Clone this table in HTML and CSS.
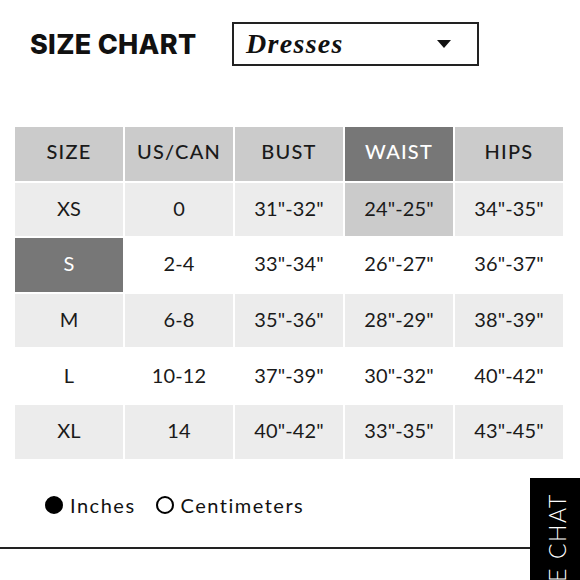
FILE: index.html
```html
<!DOCTYPE html>
<html>
<head>
<meta charset="utf-8">
<link rel="stylesheet" href="styles.css">
</head>
<body>
<div class="page">
  <header class="top">
    <h1 class="title">SIZE CHART</h1>
    <div class="select">
      <span class="select-text">Dresses</span>
      <svg class="caret" width="14" height="9" viewBox="0 0 14 9"><path d="M0 0H14L7 8Z" fill="#111"/></svg>
    </div>
  </header>

  <div class="chart">
    <div class="cell head">SIZE</div>
    <div class="cell head">US/CAN</div>
    <div class="cell head">BUST</div>
    <div class="cell head dark">WAIST</div>
    <div class="cell head">HIPS</div>

    <div class="cell alt">XS</div>
    <div class="cell alt">0</div>
    <div class="cell alt">31"-32"</div>
    <div class="cell mid">24"-25"</div>
    <div class="cell alt">34"-35"</div>

    <div class="cell dark">S</div>
    <div class="cell">2-4</div>
    <div class="cell">33"-34"</div>
    <div class="cell">26"-27"</div>
    <div class="cell">36"-37"</div>

    <div class="cell alt">M</div>
    <div class="cell alt">6-8</div>
    <div class="cell alt">35"-36"</div>
    <div class="cell alt">28"-29"</div>
    <div class="cell alt">38"-39"</div>

    <div class="cell">L</div>
    <div class="cell">10-12</div>
    <div class="cell">37"-39"</div>
    <div class="cell">30"-32"</div>
    <div class="cell">40"-42"</div>

    <div class="cell alt">XL</div>
    <div class="cell alt">14</div>
    <div class="cell alt">40"-42"</div>
    <div class="cell alt">33"-35"</div>
    <div class="cell alt">43"-45"</div>
  </div>

  <div class="units">
    <label class="unit"><span class="dot filled"></span>Inches</label>
    <label class="unit"><span class="dot"></span>Centimeters</label>
  </div>

  <div class="rule"></div>
</div>
<div class="chat"><span class="chat-text">LIVE CHAT</span></div>
</body>
</html>
```

FILE: styles.css
```css
html, body {
  margin: 0;
  padding: 0;
  background: #fff;
  width: 580px;
  height: 580px;
  overflow: hidden;
}
body {
  font-family: "Lato", "Liberation Sans", sans-serif;
  color: #1a1a1a;
  position: relative;
}
.page {
  display: flex;
  flex-direction: column;
}
.top {
  display: flex;
  align-items: center;
  padding: 22px 0 0 30px;
  height: 43px;
}
.title {
  margin: 0;
  font-family: "Inter", "Liberation Sans", sans-serif;
  font-weight: 800;
  font-size: 27px;
  letter-spacing: 0.3px;
  color: #111;
  width: 202px;
  line-height: 1;
  padding-top: 2px;
}
.select {
  box-sizing: border-box;
  width: 247px;
  height: 44px;
  border: 2px solid #222;
  display: flex;
  align-items: center;
  justify-content: space-between;
  padding: 0 26px 0 12px;
}
.select-text {
  font-family: "Liberation Serif", serif;
  font-style: italic;
  font-weight: 700;
  font-size: 28px;
  color: #111;
  letter-spacing: 1.3px;
}
.caret {
  display: block;
  margin-top: 1px;
}
.chart {
  margin: 62px 0 0 15px;
  width: 548px;
  display: grid;
  grid-template-columns: repeat(5, 108px);
  grid-auto-rows: 53.6px;
  gap: 2px;
}
.cell {
  display: flex;
  align-items: center;
  justify-content: center;
  font-size: 20px;
  color: #1a1a1a;
  background: #fff;
  letter-spacing: 0.1px;
  padding-bottom: 3px;
}
.head {
  background: #cbcbcb;
  letter-spacing: 1.2px;
  font-weight: 500;
  padding-bottom: 5px;
}
.alt { background: #ececec; }
.mid { background: #cbcbcb; }
.dark {
  background: #777;
  color: #fff;
}
.units {
  display: flex;
  align-items: center;
  gap: 20px;
  margin: 34px 0 0 45px;
}
.unit {
  display: flex;
  align-items: center;
  gap: 7px;
  font-size: 20px;
  letter-spacing: 1.5px;
  color: #111;
}
.dot {
  box-sizing: border-box;
  width: 18px;
  height: 18px;
  border-radius: 50%;
  border: 2px solid #000;
}
.dot.filled { background: #000; }
.rule {
  margin-top: 30px;
  width: 530px;
  height: 2px;
  background: #222;
}
.chat {
  position: absolute;
  left: 530px;
  top: 478px;
  width: 50px;
  height: 102px;
  background: #000;
  overflow: hidden;
}
.chat-text {
  position: absolute;
  left: 27px;
  top: 15px;
  transform-origin: 0 0;
  transform: rotate(-90deg) translate(-100%, -50%);
  white-space: nowrap;
  color: #fff;
  font-family: "Lato", "Liberation Sans", sans-serif;
  font-weight: 300;
  font-size: 23px;
  letter-spacing: 1.6px;
}
```
